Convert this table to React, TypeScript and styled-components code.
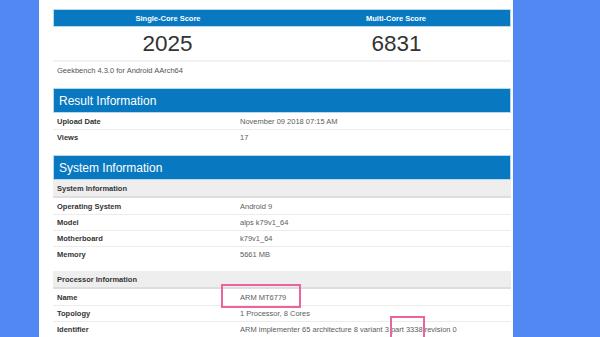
import React from "react";
import styled, { createGlobalStyle } from "styled-components";

const Global = createGlobalStyle`
  html, body { margin: 0; padding: 0; background: #5288f4; }
  body { font-family: "Liberation Sans", Arial, sans-serif; }
`;

const Panel = styled.div`
  margin-left: 39px;
  width: 474px;
  height: 337px;
  overflow: hidden;
  background: #ffffff;
  box-sizing: border-box;
  padding: 9px 2px 0 14px;
  display: flex;
  flex-direction: column;
  gap: 10px;
`;

const Section = styled.section`
  display: flex;
  flex-direction: column;
`;

const ScoreHeadBar = styled.div`
  display: grid;
  grid-template-columns: 1fr 1fr;
  height: 18px;
  background: #0879c0;
  border: 1px solid #b7d9ee;
  box-sizing: border-box;
`;

const ScoreHead = styled.div`
  color: #ffffff;
  font-weight: 700;
  font-size: 7.5px;
  display: flex;
  align-items: center;
  justify-content: center;
`;

const ScoreValues = styled.div`
  display: grid;
  grid-template-columns: 1fr 1fr;
  height: 35px;
  border-bottom: 2px solid #f1f1f1;
  box-sizing: border-box;
`;

const ScoreValue = styled.div`
  display: flex;
  align-items: center;
  justify-content: center;
  font-size: 22.5px;
  color: #333333;
`;

const Note = styled.div`
  height: 16px;
  display: flex;
  align-items: center;
  padding-left: 4px;
  font-size: 7.5px;
  color: #555555;
`;

const SectionHead = styled.h2`
  margin: 0;
  height: 25px;
  background: #0879c0;
  border: 1px solid #b7d9ee;
  box-sizing: border-box;
  color: #ffffff;
  font-weight: 400;
  font-size: 12px;
  display: flex;
  align-items: center;
  padding-left: 5px;
`;

const SubHead = styled.div<{ $spaced?: boolean }>`
  height: 18px;
  margin-top: ${(p) => (p.$spaced ? "9px" : "0")};
  background: #eeeeee;
  border-bottom: 2px solid #dedede;
  box-sizing: border-box;
  display: flex;
  align-items: center;
  padding-left: 4px;
  font-size: 7.5px;
  font-weight: 700;
  color: #333333;
`;

const Row = styled.div<{ $first?: boolean }>`
  display: grid;
  grid-template-columns: 183px 1fr;
  height: 16px;
  box-sizing: border-box;
  border-top: ${(p) => (p.$first ? "none" : "1px solid #ececec")};
  font-size: 7.5px;
`;

const Label = styled.div`
  display: flex;
  align-items: center;
  padding-left: 4px;
  font-weight: 700;
  color: #333333;
`;

const Value = styled.div`
  display: flex;
  align-items: center;
  padding-left: 4px;
  color: #5c5c5c;
  white-space: pre;
`;

const Mark = styled.span<{ $l: number; $r: number; $t: number; $b: number }>`
  position: relative;
  &::after {
    content: "";
    position: absolute;
    left: ${(p) => p.$l}px;
    right: ${(p) => p.$r}px;
    top: ${(p) => p.$t}px;
    bottom: ${(p) => p.$b}px;
    border: 2px solid #e8669c;
    pointer-events: none;
  }
`;

type Item = { label: string; value: React.ReactNode };

const Rows = ({ items }: { items: Item[] }) => (
  <>
    {items.map((it, i) => (
      <Row key={it.label} $first={i === 0}>
        <Label>{it.label}</Label>
        <Value>{it.value}</Value>
      </Row>
    ))}
  </>
);

export default function App() {
  return (
    <>
      <Global />
      <Panel>
        <Section>
          <ScoreHeadBar>
            <ScoreHead>Single-Core Score</ScoreHead>
            <ScoreHead>Multi-Core Score</ScoreHead>
          </ScoreHeadBar>
          <ScoreValues>
            <ScoreValue>2025</ScoreValue>
            <ScoreValue>6831</ScoreValue>
          </ScoreValues>
          <Note>Geekbench 4.3.0 for Android AArch64</Note>
        </Section>

        <Section>
          <SectionHead>Result Information</SectionHead>
          <Rows
            items={[
              { label: "Upload Date", value: "November 09 2018 07:15 AM" },
              { label: "Views", value: "17" },
            ]}
          />
        </Section>

        <Section>
          <SectionHead>System Information</SectionHead>
          <SubHead>System Information</SubHead>
          <Rows
            items={[
              { label: "Operating System", value: "Android 9" },
              { label: "Model", value: "alps k79v1_64" },
              { label: "Motherboard", value: "k79v1_64" },
              { label: "Memory", value: "5661 MB" },
            ]}
          />
          <SubHead $spaced>Processor Information</SubHead>
          <Rows
            items={[
              {
                label: "Name",
                value: (
                  <Mark $l={-19} $r={-15} $t={-9} $b={-6}>
                    ARM MT6779
                  </Mark>
                ),
              },
              { label: "Topology", value: "1 Processor, 8 Cores" },
              {
                label: "Identifier",
                value: (
                  <>
                    {"ARM implementer 65 architecture 8 variant 3 "}
                    <Mark $l={-1} $r={-2} $t={-9} $b={-12}>
                      part 3338
                    </Mark>
                    {" revision 0"}
                  </>
                ),
              },
            ]}
          />
        </Section>
      </Panel>
    </>
  );
}
